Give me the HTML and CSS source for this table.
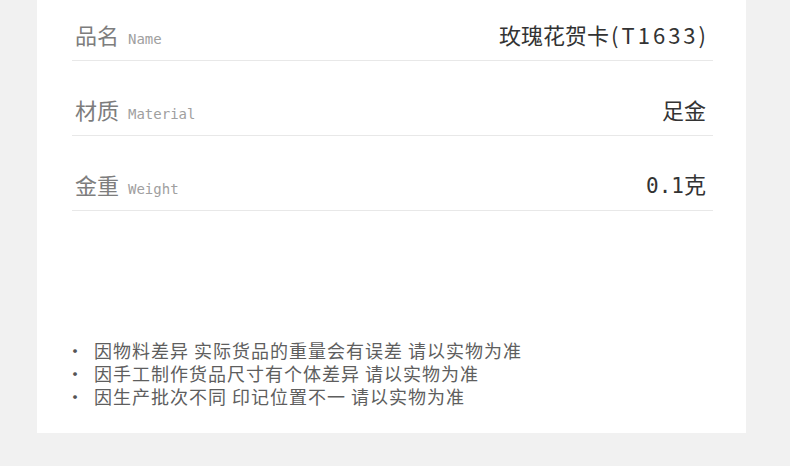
FILE: index.html
```html
<!DOCTYPE html>
<html lang="zh-CN">
<head>
<meta charset="utf-8">
<link rel="stylesheet" href="styles.css">
</head>
<body>
<div class="card">
  <div class="row">
    <div class="label"><span class="cn">品名</span><span class="en">Name</span></div>
    <div class="value">玫瑰花贺卡<span class="code">(T1633)</span></div>
  </div>
  <div class="row">
    <div class="label"><span class="cn">材质</span><span class="en">Material</span></div>
    <div class="value">足金</div>
  </div>
  <div class="row">
    <div class="label"><span class="cn">金重</span><span class="en">Weight</span></div>
    <div class="value"><span class="num">0.1</span>克</div>
  </div>
  <ul class="notes">
    <li>因物料差异 实际货品的重量会有误差 请以实物为准</li>
    <li>因手工制作货品尺寸有个体差异 请以实物为准</li>
    <li>因生产批次不同 印记位置不一 请以实物为准</li>
  </ul>
</div>
</body>
</html>
```

FILE: styles.css
```css
html, body {
  margin: 0;
  padding: 0;
  background: #f1f1f1;
}
body {
  font-family: "Noto Sans CJK SC", "Noto Sans", sans-serif;
  width: 790px;
  height: 466px;
  overflow: hidden;
}
.card {
  margin-left: 37px;
  width: 709px;
  height: 433px;
  box-sizing: border-box;
  background: #fff;
  padding: 0 33px 0 35px;
}
.row {
  display: flex;
  justify-content: space-between;
  align-items: center;
  padding: 33px 7px 11px 3px;
  height: 30px;
  border-bottom: 1px solid #e8e8e8;
}
.row:first-child {
  padding-top: 19px;
}
.label {
  display: flex;
  align-items: baseline;
  white-space: nowrap;
}
.cn {
  font-size: 22px;
  line-height: 30px;
  color: #7d7d7d;
}
.en {
  font-family: "DejaVu Sans Mono", "Liberation Mono", monospace;
  font-size: 14px;
  color: #a0a0a0;
  margin-left: 9px;
}
.value {
  font-size: 22px;
  line-height: 30px;
  color: #333;
  white-space: nowrap;
}
.code {
  letter-spacing: 3px;
  margin-left: 2px;
  margin-right: -3px;
}
.num {
  font-family: "DejaVu Sans Mono", "Liberation Mono", monospace;
  font-size: 21px;
}
.notes {
  list-style: none;
  margin: 128px 0 0;
  padding: 0;
}
.notes li {
  position: relative;
  padding-left: 22px;
  font-size: 18px;
  letter-spacing: 1px;
  line-height: 23px;
  color: #5e5e5e;
}
.notes li::before {
  content: "·";
  position: absolute;
  left: -6px;
  top: 0;
  color: #555;
}
```
